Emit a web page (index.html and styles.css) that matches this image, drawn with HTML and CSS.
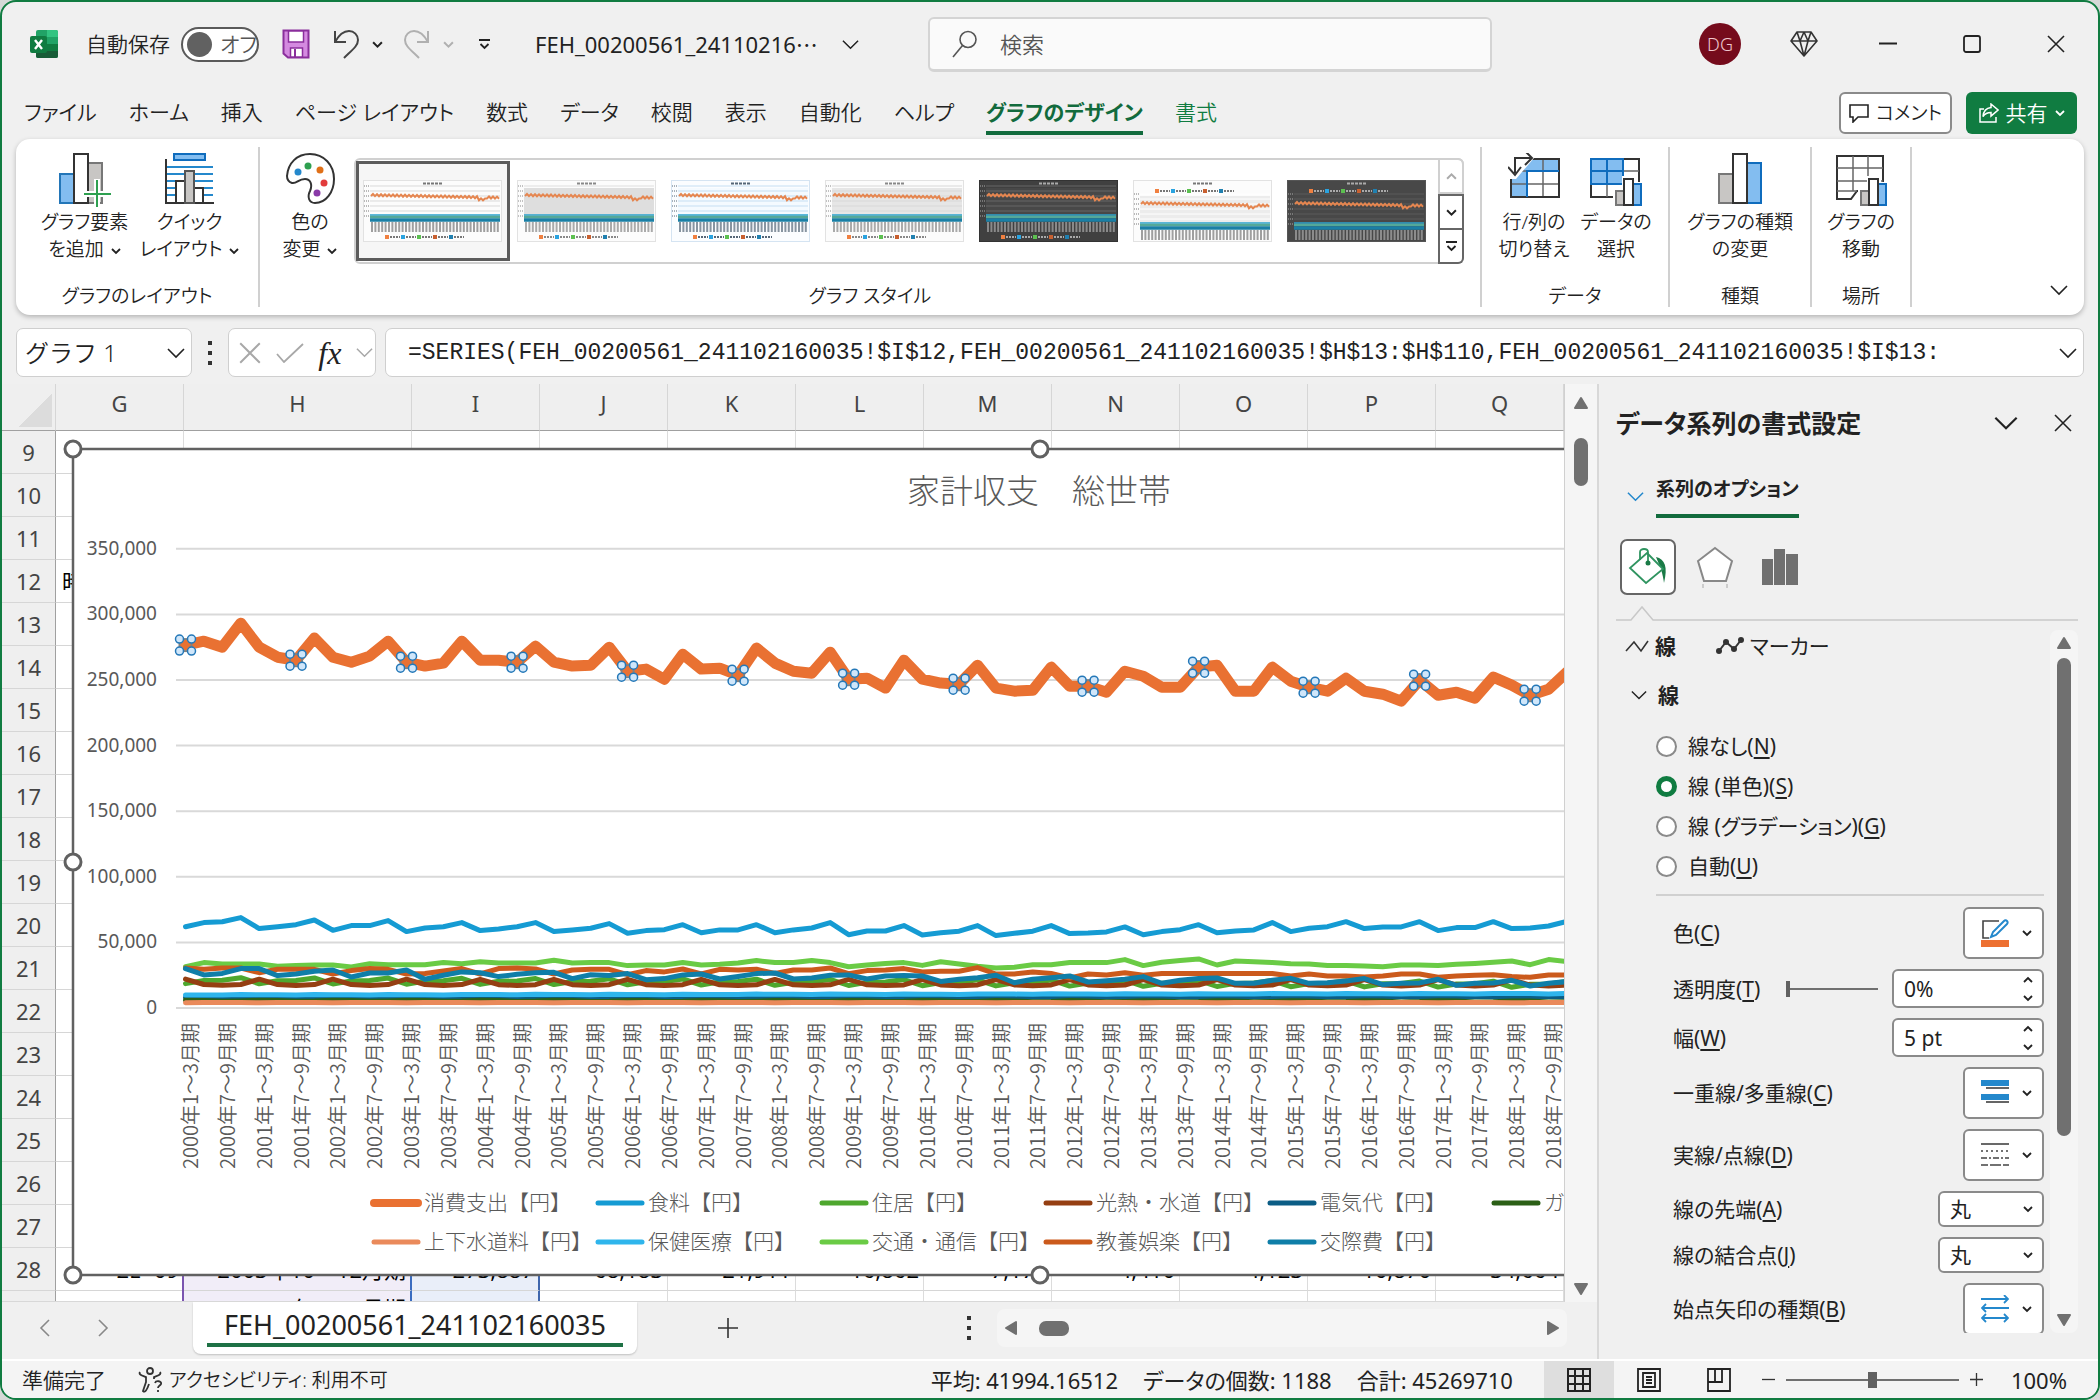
FILE: index.html
```html
<!DOCTYPE html>
<html lang="ja">
<head>
  <meta charset="UTF-8">
  <meta name="viewport" content="width=device-width, initial-scale=1.0">
  <title>FEH_00200561_241102160035 - Excel</title>
  <link rel="stylesheet" href="styles.css">
</head>
<body>
  <svg class="defs" aria-hidden="true">
    <symbol id="chev" viewBox="0 0 10 10"><path d="M1 3l4 4 4-4" fill="none" stroke="currentColor" stroke-width="1.8"/></symbol>
    <symbol id="chev-thin" viewBox="0 0 18 18"><path d="M1 5l8 8 8-8" fill="none" stroke="currentColor" stroke-width="1.6"/></symbol>
    <symbol id="cross" viewBox="0 0 18 18"><path d="M1 1l16 16M17 1L1 17" fill="none" stroke="currentColor" stroke-width="1.6"/></symbol>
    <symbol id="tri" viewBox="0 0 16 14"><path d="M8 2l6 10H2z" fill="#707070" stroke="#707070" stroke-width="2" stroke-linejoin="round"/></symbol>
  </svg>

  <div class="window">
    <header class="titlebar">
      <div class="quick">
        <svg class="logo" viewBox="0 0 28 28">
          <rect x="6" y="0" width="22" height="28" rx="2" fill="#21a366"/>
          <path d="M17 0h9a2 2 0 0 1 2 2v5H17z" fill="#33c481"/>
          <path d="M6 14h11v7H6z" fill="#107c41"/><path d="M17 14h11v7H17z" fill="#107c41"/>
          <path d="M6 21h22v5a2 2 0 0 1-2 2H8a2 2 0 0 1-2-2z" fill="#185c37"/>
          <rect x="0" y="6" width="17" height="17" rx="2" fill="#107c41"/>
          <path d="M5 10l7 9M12 10l-7 9" stroke="#fff" stroke-width="2.4"/>
        </svg>
        <span class="autosave">自動保存</span>
        <button class="toggle" aria-label="自動保存"><span class="knob"></span>オフ</button>
        <button class="tool save" aria-label="上書き保存">
          <svg width="28" height="30" viewBox="0 0 28 30"><path d="M1.5 1.500h25v27H6l-4.500-4z" fill="#d48ae0" stroke="#8a2f9c" stroke-width="2"/><rect x="6.500" y="2" width="15" height="11" fill="#fff" stroke="#8a2f9c" stroke-width="1.500"/><rect x="8.500" y="19" width="12" height="9" fill="#fff" stroke="#8a2f9c" stroke-width="1.500"/><path d="M13 20v8" stroke="#8a2f9c" stroke-width="2"/></svg>
        </button>
        <button class="tool undo" aria-label="元に戻す">
          <svg width="26" height="30" viewBox="0 0 26 30" fill="none" stroke="#444" stroke-width="2"><path d="M2 2v11h11M2 13C7 4 12 2 16 2c5 0 9 4 9 9 0 6-6 10-14 18"/></svg>
          <svg width="11" height="11"><use href="#chev"/></svg>
        </button>
        <button class="tool redo" aria-label="やり直し">
          <svg width="26" height="30" viewBox="0 0 26 30" fill="none" stroke="#b0b0b0" stroke-width="2"><path d="M24 2v11H13M24 13C19 4 14 2 10 2 5 2 1 6 1 11c0 6 6 10 14 18"/></svg>
          <svg width="11" height="11"><use href="#chev"/></svg>
        </button>
        <button class="tool customize" aria-label="カスタマイズ">
          <svg width="13" height="13" viewBox="0 0 13 13" fill="none" stroke="#222" stroke-width="1.800"><path d="M1 2h11M2.500 6l4 4 4-4"/></svg>
        </button>
        <button class="filename">FEH_00200561_24110216⋯<svg width="17" height="17"><use href="#chev-thin"/></svg></button>
      </div>
      <label class="search">
        <svg width="26" height="28" viewBox="0 0 26 28" fill="none" stroke="#555" stroke-width="1.600"><circle cx="16" cy="9.500" r="8"/><path d="M10.500 15.500L1 27"/></svg>
        <input type="text" placeholder="検索">
      </label>
      <div class="wincontrols">
        <span class="avatar">DG</span>
        <svg width="28" height="28" viewBox="0 0 28 28" fill="none" stroke="#333" stroke-width="1.600" stroke-linejoin="round"><path d="M7 2h14l6 9-13 15L1 11zM1 11h26M10 11l4 15 4-15M7 2l3 9 4-9 4 9 3-9"/></svg>
        <svg width="18" height="18" viewBox="0 0 18 18"><path d="M0 8.500h18" stroke="#222" stroke-width="1.800"/></svg>
        <svg width="18" height="18" viewBox="0 0 18 18"><rect x="1" y="1" width="16" height="16" rx="2" fill="none" stroke="#222" stroke-width="1.800"/></svg>
        <svg width="18" height="18"><use href="#cross"/></svg>
      </div>
    </header>

    <nav class="tabs">
      <a href="#">ファイル</a>
      <a href="#">ホーム</a>
      <a href="#">挿入</a>
      <a href="#">ページ レイアウト</a>
      <a href="#">数式</a>
      <a href="#">データ</a>
      <a href="#">校閲</a>
      <a href="#">表示</a>
      <a href="#">自動化</a>
      <a href="#">ヘルプ</a>
      <a href="#" class="active">グラフのデザイン</a>
      <a href="#" class="context">書式</a>
      <button class="comment"><svg width="20" height="20" viewBox="0 0 20 20"><path d="M1 2h18v12H9l-5 5v-5H1z" fill="none" stroke="#222" stroke-width="1.600"/></svg>コメント</button>
      <button class="share"><svg width="20" height="20" viewBox="0 0 20 20" fill="none" stroke="#fff" stroke-width="1.500"><path d="M5 6H1v13h16v-5M12 1l7 6-7 6V9.500c-4 0-6 1-8 4C4.500 8 7.500 5 12 4.500z"/></svg>共有<svg width="10" height="10"><use href="#chev"/></svg></button>
    </nav>

    <section class="ribbon">
      <div class="group layout-group">
        <div class="group-body">
          <button class="big">
            <svg width="52" height="54" viewBox="0 0 52 54"><rect x="1" y="21" width="14" height="29" fill="#83bdf0" stroke="#2376b8" stroke-width="2"/><rect x="29" y="10" width="14" height="40" fill="#c8c6c4" stroke="#777" stroke-width="2"/><rect x="15" y="1" width="14" height="49" fill="#fff" stroke="#333" stroke-width="2"/><path d="M38 26v28M24 41h28" stroke="#fff" stroke-width="6"/><path d="M38 27v27M25 41h27" stroke="#2ea050" stroke-width="2"/></svg>
            <span>グラフ要素</span><span>を追加 <svg width="10" height="10"><use href="#chev"/></svg></span>
          </button>
          <button class="big">
            <svg width="52" height="54" viewBox="0 0 52 54"><path d="M3 14h46M3 21h46M3 28h46M3 35h46M3 42h46" stroke="#2488cc" stroke-width="2"/><rect x="10" y="1" width="31" height="6" fill="#83bdf0" stroke="#0f6cbd" stroke-width="2"/><path d="M2 6v44h48" fill="none" stroke="#333" stroke-width="2"/><rect x="12" y="28" width="9" height="22" fill="#fff" stroke="#333" stroke-width="2"/><rect x="30" y="35" width="9" height="15" fill="#fff" stroke="#333" stroke-width="2"/><rect x="21" y="18" width="9" height="32" fill="#c8c6c4" stroke="#555" stroke-width="2"/></svg>
            <span>クイック</span><span>レイアウト <svg width="10" height="10"><use href="#chev"/></svg></span>
          </button>
        </div>
        <h2>グラフのレイアウト</h2>
      </div>
      <div class="group style-group">
        <div class="group-body">
          <button class="big">
            <svg width="52" height="54" viewBox="0 0 52 54"><path d="M26 1c14 0 24 11 24 25 0 13-8 24-19 24-6 0-8-6-5-12 3-7 0-12-5-12-7 0-8 5-13 4-3-1-5-3-5-7C4 10 13 1 26 1z" fill="#fff" stroke="#333" stroke-width="2"/><circle cx="14" cy="19" r="3.500" fill="#2488cc"/><circle cx="24" cy="13" r="3.500" fill="#2ea050"/><circle cx="36" cy="17" r="3.500" fill="#e07018"/><circle cx="40" cy="30" r="3.500" fill="#e23c3c"/><circle cx="33" cy="40" r="3.500" fill="#8a3aa8"/></svg>
            <span>色の</span><span>変更 <svg width="10" height="10"><use href="#chev"/></svg></span>
          </button>
          <div class="gallery">
            <div class="gallery-items" id="gallery"></div>
            <div class="gallery-nav">
              <button class="off" aria-label="上へ"><svg class="flip" width="11" height="11"><use href="#chev"/></svg></button>
              <button aria-label="下へ"><svg width="11" height="11"><use href="#chev"/></svg></button>
              <button aria-label="その他"><svg width="13" height="13" viewBox="0 0 13 13" fill="none" stroke="#222" stroke-width="1.800"><path d="M1 2h11M2.500 6l4 4 4-4"/></svg></button>
            </div>
          </div>
        </div>
        <h2>グラフ スタイル</h2>
      </div>
      <div class="group data-group">
        <div class="group-body">
          <button class="big">
            <svg width="52" height="54" viewBox="0 0 52 54"><rect x="3" y="6" width="48" height="38" fill="#fff"/><path d="M3 6h48v12H19v26H3z" fill="#83bdf0"/><path d="M3 31h48M19 18v26M35 6v38M3 18h48" stroke="#666" stroke-width="1.500"/><path d="M3 44V6h48v38z" fill="none" stroke="#333" stroke-width="2"/><path d="M51 18H19v26" fill="none" stroke="#0f6cbd" stroke-width="2"/><path d="M0 0h26v5L8 26H0z" fill="#fff"/><path d="M7 20V5h16M0 14l7 8 6-8M17-2l7 7-7 7" fill="none" stroke="#333" stroke-width="2"/></svg>
            <span>行/列の</span><span>切り替え</span>
          </button>
          <button class="big">
            <svg width="52" height="54" viewBox="0 0 52 54"><rect x="1" y="6" width="48" height="38" fill="#fff" stroke="#333" stroke-width="2"/><path d="M1 31h48M17 6v38M33 6v38M1 18h48" stroke="#666" stroke-width="1.500"/><path d="M1 6h32v25H1zM17 6v25M1 18h32" fill="#83bdf0" stroke="#0f6cbd" stroke-width="2"/><path d="M23 54V34h9V23h14v6h7v25z" fill="#fff"/><rect x="26" y="38" width="9" height="14" fill="#c8c6c4" stroke="#777" stroke-width="2"/><rect x="43" y="31" width="8" height="21" fill="#83bdf0" stroke="#0f6cbd" stroke-width="2"/><rect x="34" y="26" width="9" height="26" fill="#fff" stroke="#333" stroke-width="2"/></svg>
            <span>データの</span><span>選択</span>
          </button>
        </div>
        <h2>データ</h2>
      </div>
      <div class="group type-group">
        <div class="group-body">
          <button class="big">
            <svg width="52" height="54" viewBox="0 0 52 54"><rect x="5" y="21" width="14" height="29" fill="#c8c6c4" stroke="#777" stroke-width="2"/><rect x="33" y="10" width="14" height="40" fill="#83bdf0" stroke="#0f6cbd" stroke-width="2"/><rect x="19" y="1" width="14" height="49" fill="#fff" stroke="#333" stroke-width="2"/></svg>
            <span>グラフの種類</span><span>の変更</span>
          </button>
        </div>
        <h2>種類</h2>
      </div>
      <div class="group place-group">
        <div class="group-body">
          <button class="big">
            <svg width="52" height="54" viewBox="0 0 52 54"><path d="M2 3h46v35H22l-6 8H2z" fill="#fff" stroke="#333" stroke-width="2"/><path d="M2 15h46M2 28h46M2 38h20M18 3v35M33 3v35" stroke="#666" stroke-width="1.500"/><path d="M23 54V34h9V23h14v6h7v25z" fill="#fff"/><rect x="26" y="38" width="9" height="14" fill="#c8c6c4" stroke="#777" stroke-width="2"/><rect x="43" y="31" width="8" height="21" fill="#83bdf0" stroke="#0f6cbd" stroke-width="2"/><rect x="34" y="26" width="9" height="26" fill="#fff" stroke="#333" stroke-width="2"/></svg>
            <span>グラフの</span><span>移動</span>
          </button>
        </div>
        <h2>場所</h2>
      </div>
      <button class="collapse" aria-label="リボンを折りたたむ"><svg width="18" height="18"><use href="#chev-thin"/></svg></button>
    </section>

    <div class="formulabar">
      <label class="namebox"><input type="text" value="グラフ 1" aria-label="名前ボックス"><svg width="18" height="18"><use href="#chev-thin"/></svg></label>
      <span class="dots"></span>
      <div class="fxbox">
        <svg width="22" height="22"><use href="#cross"/></svg>
        <svg width="28" height="20" viewBox="0 0 28 20"><path d="M1 11l7 8L27 1" fill="none" stroke="currentColor" stroke-width="1.800"/></svg>
        <i>fx</i>
        <svg width="17" height="17"><use href="#chev-thin"/></svg>
      </div>
      <label class="formula"><input type="text" aria-label="数式" value="=SERIES(FEH_00200561_241102160035!$I$12,FEH_00200561_241102160035!$H$13:$H$110,FEH_00200561_241102160035!$I$13:"><svg width="18" height="18"><use href="#chev-thin"/></svg></label>
    </div>

    <main class="workspace">
      <div class="book">
        <div class="sheet-row">
          <div class="sheet">
            <table class="cells">
              <colgroup><col class="c-num"><col class="c-std"><col class="c-wide"><col class="c-std" span="9"></colgroup>
              <thead>
                <tr><th class="corner"></th><th>G</th><th>H</th><th>I</th><th>J</th><th>K</th><th>L</th><th>M</th><th>N</th><th>O</th><th>P</th><th>Q</th></tr>
              </thead>
              <tbody id="rows"></tbody>
            </table>
            <svg class="chart" id="chart" width="1960" height="848" viewBox="62 438 1960 848"></svg>
          </div>
          <div class="vscroll">
            <svg width="16" height="14"><use href="#tri"/></svg>
            <span class="thumb"></span>
            <svg class="flip down" width="16" height="14"><use href="#tri"/></svg>
          </div>
        </div>
        <div class="sheetbar">
          <button class="nav" aria-label="前"><svg class="right" width="18" height="18"><use href="#chev-thin"/></svg></button>
          <button class="nav" aria-label="次"><svg class="left" width="18" height="18"><use href="#chev-thin"/></svg></button>
          <button class="sheet-tab"><span>FEH_00200561_241102160035</span></button>
          <button class="add" aria-label="新しいシート"><svg width="20" height="20" viewBox="0 0 20 20"><path d="M10 0v20M0 10h20" stroke="#333" stroke-width="1.600"/></svg></button>
          <span class="dots"></span>
          <div class="hscroll">
            <svg class="left" width="16" height="14"><use href="#tri"/></svg>
            <span class="thumb"></span>
            <svg class="right" width="16" height="14"><use href="#tri"/></svg>
          </div>
        </div>
      </div>

      <aside class="panel">
        <div class="panel-head">
          <h1>データ系列の書式設定</h1>
          <button aria-label="オプション"><svg width="24" height="24"><use href="#chev-thin"/></svg></button>
          <button aria-label="閉じる"><svg width="18" height="18"><use href="#cross"/></svg></button>
        </div>
        <div class="option-head">
          <svg width="17" height="17"><use href="#chev-thin"/></svg>
          <a href="#">系列のオプション</a>
        </div>
        <div class="icons">
          <button class="on" aria-label="塗りつぶしと線">
            <svg width="40" height="40" viewBox="0 0 40 40"><path d="M28 10c9 2 12 10 8 26-1-7-2-10-3-14z" fill="#1a7a46"/><path d="M19 6L35 22 18 36 2 21z" fill="#fff" stroke="#2f9460" stroke-width="1.800"/><path d="M12 13V5c0-4 8-4 8 0v10" fill="none" stroke="#2f9460" stroke-width="1.800"/><circle cx="20" cy="16" r="2.500" fill="#1a7a46"/></svg>
          </button>
          <button aria-label="効果">
            <svg width="40" height="42" viewBox="0 0 40 42"><path d="M20 2l17 13-6 20H9L3 15z" fill="#fff" stroke="#888" stroke-width="2"/><path d="M8 38v4M32 38v4" stroke="#ccc" stroke-width="2"/></svg>
          </button>
          <button aria-label="系列のオプション">
            <svg width="36" height="38" viewBox="0 0 36 38" fill="#707070"><path d="M0 11h11v26H0zM12 1h11v36H12zM24 6h12v31H24z"/></svg>
          </button>
        </div>
        <svg class="notch" height="16" viewBox="0 0 462 16" preserveAspectRatio="xMinYMin slice"><path d="M0 15h15L26 2l11 13h425" fill="none" stroke="#c8c8c8" stroke-width="1.500"/></svg>
        <div class="panel-scroll">
          <div class="panel-body">
            <div class="modes">
              <a href="#" class="on"><svg width="24" height="14" viewBox="0 0 24 14"><path d="M1 12l8-9 7 9 7-10" fill="none" stroke="#333" stroke-width="1.600"/></svg>線</a>
              <a href="#"><svg width="28" height="18" viewBox="0 0 28 18"><path d="M3 14l7-9 8 7 7-9" fill="none" stroke="#333" stroke-width="2"/><g fill="#333"><circle cx="3" cy="14" r="3"/><circle cx="10" cy="5" r="3"/><circle cx="18" cy="12" r="3"/><circle cx="25" cy="3" r="3"/></g></svg>マーカー</a>
            </div>
            <h3><svg width="16" height="16"><use href="#chev-thin"/></svg>線</h3>
            <div class="radios">
              <label><input type="radio" name="line">線なし(<u>N</u>)</label>
              <label><input type="radio" name="line" checked>線 (単色)(<u>S</u>)</label>
              <label><input type="radio" name="line">線 (グラデーション)(<u>G</u>)</label>
              <label><input type="radio" name="line">自動(<u>U</u>)</label>
            </div>
            <div class="fields">
              <div class="field tall">
                <label for="color">色(<u>C</u>)</label>
                <button class="pick" id="color"><svg width="28" height="28" viewBox="0 0 28 28"><path d="M18 2H2v17h6" fill="none" stroke="#444" stroke-width="1.600"/><path d="M23 2c2-2 5 1 3 3L15 16l-5 2 2-5z" fill="#fff" stroke="#2488cc" stroke-width="2"/><path d="M0 21h28v7H0z" fill="#ed7031"/></svg><svg width="10" height="10"><use href="#chev"/></svg></button>
              </div>
              <div class="field">
                <label for="alpha">透明度(<u>T</u>)</label>
                <input type="range" class="slider" min="0" max="100" value="0" aria-label="透明度">
                <span class="spin"><input type="text" id="alpha" value="0%"><span class="arrows"><svg class="flip" width="10" height="10"><use href="#chev"/></svg><svg width="10" height="10"><use href="#chev"/></svg></span></span>
              </div>
              <div class="field">
                <label for="width">幅(<u>W</u>)</label>
                <span class="spin"><input type="text" id="width" value="5 pt"><span class="arrows"><svg class="flip" width="10" height="10"><use href="#chev"/></svg><svg width="10" height="10"><use href="#chev"/></svg></span></span>
              </div>
              <div class="field tall">
                <label for="compound">一重線/多重線(<u>C</u>)</label>
                <button class="pick" id="compound"><svg width="28" height="28" viewBox="0 0 28 28"><path d="M0 4h28M0 18h28" stroke="#2488cc" stroke-width="6"/><path d="M5 9h23M5 23h23" stroke="#333" stroke-width="1.600"/></svg><svg width="10" height="10"><use href="#chev"/></svg></button>
              </div>
              <div class="field tall">
                <label for="dash">実線/点線(<u>D</u>)</label>
                <button class="pick" id="dash"><svg width="28" height="28" viewBox="0 0 28 28" stroke="#444" stroke-width="1.600"><path d="M0 3h28"/><path d="M0 10h28" stroke-dasharray="2 3"/><path d="M0 17h28" stroke-dasharray="6 2 2 2"/><path d="M0 24h28" stroke-dasharray="7 2 11 2"/></svg><svg width="10" height="10"><use href="#chev"/></svg></button>
              </div>
              <div class="field short">
                <label for="cap">線の先端(<u>A</u>)</label>
                <span class="select"><select id="cap"><option>丸</option></select><svg width="10" height="10"><use href="#chev"/></svg></span>
              </div>
              <div class="field short">
                <label for="join">線の結合点(<u>J</u>)</label>
                <span class="select"><select id="join"><option>丸</option></select><svg width="10" height="10"><use href="#chev"/></svg></span>
              </div>
              <div class="field tall">
                <label for="arrow">始点矢印の種類(<u>B</u>)</label>
                <button class="pick" id="arrow"><svg width="28" height="28" viewBox="0 0 28 28" fill="none" stroke="#2488cc" stroke-width="1.800"><path d="M0 4h27M23 0l4 4-4 4M28 13H1M5 9l-4 4 4 4M1 23h26M5 19l-4 4 4 4M23 19l4 4-4 4"/></svg><svg width="10" height="10"><use href="#chev"/></svg></button>
              </div>
            </div>
          </div>
          <div class="vscroll panel-vscroll">
            <svg width="16" height="14"><use href="#tri"/></svg>
            <span class="thumb"></span>
            <svg class="flip down" width="16" height="14"><use href="#tri"/></svg>
          </div>
        </div>
      </aside>
    </main>

    <footer class="status">
      <span>準備完了</span>
      <span class="access"><svg width="26" height="26" viewBox="0 0 26 26" fill="none" stroke="#333" stroke-width="1.800"><circle cx="12" cy="4" r="3"/><path d="M2 5c-2 3 4 4 6 5v5l-3 9c2 2 4-1 6-7M22 5c2 3-4 4-6 5v2M17 16c1-3 7-2 6 1-1 2-3 2-3 4M20 23v2"/></svg>アクセシビリティ: 利用不可</span>
      <div class="stats"><span>平均: 41994.16512</span><span>データの個数: 1188</span><span>合計: 45269710</span></div>
      <button class="view on" aria-label="標準"><svg width="24" height="24" viewBox="0 0 24 24" fill="none" stroke="#222" stroke-width="2"><path d="M1 1h22v22H1zM1 8h22M1 16h22M8 1v22M16 1v22"/></svg></button>
      <button class="view" aria-label="ページ レイアウト"><svg width="24" height="24" viewBox="0 0 24 24" fill="none" stroke="#222" stroke-width="1.800"><path d="M1 1h22v22H1zM6 5h12v14H6zM9 9h6M9 12h6M9 15h6"/></svg></button>
      <button class="view" aria-label="改ページ プレビュー"><svg width="24" height="24" viewBox="0 0 24 24" fill="none" stroke="#222" stroke-width="1.800"><path d="M1 1h22v22H1zM1 14h14V1M8 1v13"/></svg></button>
      <div class="zoom">
        <svg width="13" height="13" viewBox="0 0 13 13"><path d="M0 6.500h13" stroke="#333" stroke-width="1.300"/></svg>
        <input type="range" min="0" max="200" value="100" aria-label="ズーム">
        <svg width="13" height="13" viewBox="0 0 13 13"><path d="M0 6.500h13M6.500 0v13" stroke="#333" stroke-width="1.300"/></svg>
        <span>100%</span>
      </div>
    </footer>
  </div>
  <script src="chart.js"></script>
</body>
</html>
```
FILE: styles.css
```css
* {
  box-sizing: border-box;
}
body {
  margin: 0;
  background: #d5d9d7;
  color: #222;
  font-family: "Noto Sans", "Noto Sans CJK JP", sans-serif;
  font-feature-settings: "palt";
  font-size: 21px;
  font-weight: 350;
  line-height: 26px;
}
button, input, select {
  font: inherit;
  font-feature-settings: inherit;
  color: inherit;
}
button {
  background: none;
  border: none;
  padding: 0;
  white-space: nowrap;
}
input {
  border: none;
  background: none;
  outline: none;
  min-width: 0;
}
a {
  color: inherit;
  text-decoration: none;
}
h1, h2, h3 {
  margin: 0;
  font-weight: inherit;
}
svg {
  display: block;
  flex: none;
}
.defs {
  position: absolute;
  width: 0;
  height: 0;
}
.flip {
  transform: rotate(180deg);
}
.left {
  transform: rotate(-90deg);
}
.right {
  transform: rotate(90deg);
}
.window {
  display: flex;
  flex-direction: column;
  height: 100vh;
  border: 2px solid #107c41;
  border-radius: 16px;
  background: #f0f0f0;
  overflow: hidden;
}

/* title bar */
.titlebar {
  display: flex;
  align-items: center;
  height: 84px;
  padding-left: 28px;
}
.quick {
  display: flex;
  align-items: center;
  flex: none;
  width: 898px;
}
.logo {
  width: 28px;
  height: 28px;
}
.autosave {
  margin-left: 28px;
  width: 95px;
  white-space: nowrap;
}
.toggle {
  display: flex;
  align-items: center;
  gap: 8px;
  flex: none;
  width: 78px;
  height: 35px;
  padding: 0 4px;
  border: 2px solid #5a5a5a;
  border-radius: 18px;
  background: #fff;
  color: #555;
}
.knob {
  flex: none;
  width: 25px;
  height: 25px;
  border-radius: 50%;
  background: #616161;
}
.tool {
  display: flex;
  align-items: center;
  gap: 13px;
  margin-left: 23px;
}
.redo {
  color: #b0b0b0;
  margin-left: 21px;
}
.customize {
  margin-left: 24px;
}
.filename {
  display: flex;
  align-items: center;
  gap: 24px;
  margin-left: 44px;
  font-size: 22px;
  font-weight: 400;
}
.search {
  display: flex;
  align-items: center;
  gap: 20px;
  width: 564px;
  height: 55px;
  padding: 0 22px;
  border: 2px solid #d4d4d4;
  border-bottom-width: 3px;
  border-radius: 6px;
  background: #fafafa;
}
.search input {
  flex: 1;
  font-size: 22px;
}
.search input::placeholder {
  color: #555;
  opacity: 1;
}
.wincontrols {
  display: grid;
  grid-template-columns: repeat(5, 84px);
  align-items: center;
  justify-items: center;
  margin-left: auto;
}
.avatar {
  width: 42px;
  height: 42px;
  border-radius: 50%;
  background: #750b1c;
  color: #f0c8ce;
  font-size: 18px;
  line-height: 42px;
  text-align: center;
}

/* tabs */
.tabs {
  display: flex;
  align-items: center;
  gap: 32px;
  height: 53px;
  padding: 0 21px 0 22px;
  white-space: nowrap;
}
.tabs a {
  height: 44px;
  line-height: 42px;
}
.tabs .active {
  color: #126b3d;
  font-weight: bold;
  border-bottom: 4px solid #126b3d;
}
.tabs .context {
  color: #107c41;
}
.comment, .share {
  display: flex;
  align-items: center;
  justify-content: center;
  gap: 7px;
  height: 42px;
  border-radius: 6px;
}
.comment {
  width: 113px;
  margin-left: auto;
  border: 2px solid #8a8a8a;
  background: #fff;
  font-size: 19px;
}
.share {
  width: 111px;
  margin-left: -18px;
  background: #107c41;
  color: #fff;
}

/* ribbon */
.ribbon {
  display: flex;
  height: 176px;
  margin: 0 14px;
  padding: 8px 0;
  border-radius: 14px;
  background: #fff;
  box-shadow: 0 2px 5px rgba(0, 0, 0, 0.25);
  font-size: 19px;
}
.group {
  display: flex;
  flex-direction: column;
  justify-content: space-between;
  border-right: 2px solid #d0d0d0;
}
.group h2 {
  font-size: 19px;
  line-height: 22px;
  text-align: center;
}
.group-body {
  display: flex;
  justify-content: center;
}
.layout-group {
  width: 244px;
}
.style-group {
  flex: 1;
}
.data-group {
  width: 188px;
}
.type-group {
  width: 142px;
}
.place-group {
  width: 100px;
}
.layout-group .group-body {
  gap: 3px;
}
.layout-group .big {
  width: 102px;
}
.data-group .group-body {
  gap: 4px;
}
.data-group .big {
  width: 78px;
}
.style-group .group-body {
  justify-content: flex-start;
  gap: 10px;
  padding: 0 16px 0 16px;
}
.style-group .big {
  width: 68px;
}
.big {
  display: flex;
  flex-direction: column;
  align-items: center;
  padding-top: 6px;
}
.big > svg {
  margin-bottom: 2px;
}
.big span {
  line-height: 27px;
}
.big span svg {
  display: inline-block;
  margin-left: 2px;
}
.gallery {
  display: flex;
  flex: 1;
  min-width: 0;
  height: 106px;
  margin-top: 11px;
  border: 2px solid #d0d0d0;
  border-radius: 6px;
}
.gallery-items {
  display: flex;
  flex: 1;
  overflow: hidden;
}
.style-item {
  flex: none;
  width: 154px;
  height: 100px;
  margin-top: 1px;
  padding: 15px 4px;
  border: 3px solid transparent;
}
.style-item.on {
  border-color: #5c5c5c;
  background: #f6f6f6;
}
.gallery-nav {
  display: flex;
  flex-direction: column;
  width: 26px;
  margin: -2px -2px -2px 0;
}
.gallery-nav button {
  display: flex;
  align-items: center;
  justify-content: center;
  flex: 1;
  border: 2px solid #666;
}
.gallery-nav button + button + button {
  border-top: none;
  border-bottom-right-radius: 6px;
}
.gallery-nav .off {
  border-color: #d0d0d0;
  border-top-right-radius: 6px;
  color: #aaa;
}
.collapse {
  display: flex;
  align-items: flex-end;
  justify-content: flex-end;
  flex: none;
  width: 172px;
  padding: 0 16px 8px 0;
}

/* formula bar */
.formulabar {
  display: flex;
  margin: 13px 14px 7px;
  height: 49px;
}
.namebox, .fxbox, .formula {
  display: flex;
  align-items: center;
  border: 1px solid #cfcfcf;
  border-radius: 7px;
  background: #fff;
}
.namebox {
  width: 176px;
  padding: 0 6px;
}
.namebox input {
  flex: 1;
  font-size: 24px;
  font-feature-settings: normal;
}
.dots {
  width: 4px;
  height: 24px;
  margin: auto 16px;
  background: repeating-linear-gradient(#333 0 4px, transparent 4px 10px);
}
.fxbox {
  justify-content: space-between;
  width: 148px;
  padding: 0 2px 0 10px;
  color: #a8a8a8;
}
.fxbox i {
  color: #222;
  font-family: "Liberation Serif", serif;
  font-size: 32px;
}
.formula {
  flex: 1;
  margin-left: 9px;
  padding: 0 6px 0 20px;
}
.formula input {
  flex: 1;
  font-family: "Liberation Mono", monospace;
  font-size: 23px;
}

/* worksheet */
.workspace {
  display: flex;
  flex: 1;
  min-height: 0;
}
.book {
  display: flex;
  flex-direction: column;
  flex: 1;
  min-width: 0;
}
.sheet-row {
  display: flex;
  flex: 1;
  min-height: 0;
}
.sheet {
  position: relative;
  flex: 1;
  overflow: hidden;
  background: #fff;
  border-right: 1px solid #d0d0d0;
  border-bottom: 1px solid #d8d8d8;
}
.cells {
  table-layout: fixed;
  width: 1562px;
  border-spacing: 0;
  font-feature-settings: normal;
  font-size: 22px;
  font-weight: 400;
}
.c-num {
  width: 54px;
}
.c-std {
  width: 128px;
}
.c-wide {
  width: 228px;
}
.cells th {
  padding: 0;
  background: #efefef;
  color: #444;
  font-weight: normal;
  border-right: 1px solid #d6d6d6;
}
.cells thead th {
  height: 47px;
  padding-top: 6px;
  vertical-align: top;
  border-bottom: 1px solid #a0a0a0;
}
.cells .corner {
  background: linear-gradient(to bottom right, transparent 50%, #dcdcdc 50%) 16px 9px / 34px 34px no-repeat #efefef;
}
.cells td, .cells tbody th {
  height: 43px;
  border-bottom: 1px solid #d6d6d6;
}
.cells tbody th {
  border-right-color: #a0a0a0;
}
.cells td {
  padding: 0 4px;
  border-right: 1px solid #dcdcdc;
  color: #000;
  line-height: 30px;
  text-align: right;
  white-space: nowrap;
}
.cells tr:last-child td {
  line-height: 34px;
  vertical-align: top;
}
.cells td.head {
  text-align: left;
  padding-left: 6px;
}
.cells td.sel-cat {
  background: #f1edf8;
  border-right: 2px solid #3a6cc0;
  box-shadow: -2px 0 #7b55b0;
}
.cells td.sel-val {
  background: #e9eef9;
  border-right: 2px solid #3f66ad;
}
.chart {
  position: absolute;
  left: 60px;
  top: 54px;
}
.chart text {
  fill: #595959;
  font-family: "Noto Sans", "Noto Sans CJK JP", sans-serif;
}
.chart .title {
  font-size: 33px;
  font-weight: 300;
}
.chart .axis {
  font-size: 19px;
  font-weight: 400;
}
.chart .cat, .chart .legend {
  font-family: "Noto Sans CJK JP", sans-serif;
  font-feature-settings: normal;
  font-size: 20px;
  font-weight: 350;
}
.chart .legend {
  font-size: 21px;
  font-weight: 300;
}
.vscroll {
  display: flex;
  flex-direction: column;
  align-items: center;
  width: 32px;
  padding: 12px 0 6px;
  background: #f5f5f5;
}
.vscroll .thumb {
  width: 14px;
  height: 48px;
  margin-top: 28px;
  border-radius: 7px;
  background: #707070;
}
.vscroll .down {
  margin-top: auto;
}

/* sheet tabs */
.sheetbar {
  display: flex;
  align-items: center;
  height: 57px;
  padding: 0 30px 5px 0;
}
.nav {
  width: 58px;
  padding-left: 34px;
  color: #888;
}
.sheet-tab {
  align-self: stretch;
  margin-left: 75px;
  padding: 0 14px;
  border-radius: 0 0 8px 8px;
  background: #fff;
  box-shadow: 0 1px 2px rgba(0, 0, 0, 0.2);
  font-size: 27px;
  font-weight: 400;
}
.sheet-tab span {
  display: block;
  width: 416px;
  height: 44px;
  margin-bottom: 6px;
  line-height: 44px;
  border-bottom: 4px solid #1e7145;
}
.add {
  margin-left: 81px;
}
.sheetbar .dots {
  margin: 0 26px 0 auto;
}
.hscroll {
  display: flex;
  align-items: center;
  width: 570px;
  height: 38px;
  padding: 0 6px;
  border-radius: 8px;
  background: #f5f5f5;
}
.hscroll .thumb {
  width: 30px;
  height: 15px;
  margin: 0 auto 0 20px;
  border-radius: 7px;
  background: #707070;
}

/* format panel */
.panel {
  display: flex;
  flex-direction: column;
  width: 501px;
  padding: 19px 20px 26px 17px;
  border-left: 2px solid #d8d8d8;
}
.panel-head {
  display: flex;
  align-items: center;
  height: 40px;
  padding-right: 6px;
}
.panel-head h1 {
  margin-right: auto;
  font-size: 25px;
  font-weight: bold;
}
.panel-head button + button {
  margin-left: 36px;
}
.option-head {
  display: flex;
  align-items: center;
  gap: 12px;
  height: 44px;
  margin: 31px 0 0 11px;
  color: #2488cc;
}
.option-head a {
  height: 44px;
  color: #222;
  font-size: 19px;
  font-weight: bold;
  line-height: 30px;
  border-bottom: 4px solid #126b3d;
}
.icons {
  display: flex;
  align-items: center;
  gap: 19px;
  margin: 21px 0 0 4px;
}
.icons button {
  display: flex;
  align-items: center;
  justify-content: center;
  width: 56px;
  height: 56px;
}
.icons button + button {
  width: 40px;
}
.icons button + button + button {
  margin-left: 6px;
}
.icons .on {
  border: 2px solid #666;
  border-radius: 7px;
  background: #fff;
}
.notch {
  width: 100%;
  margin-top: 10px;
}
.panel-scroll {
  display: flex;
  flex: 1;
  min-height: 0;
  margin-top: 9px;
}
.panel-body {
  flex: 1;
  overflow: hidden;
  padding: 3px 6px 0 9px;
  font-weight: 400;
}
.modes {
  display: flex;
  gap: 40px;
}
.modes a {
  display: flex;
  align-items: center;
  gap: 6px;
}
.modes .on {
  font-weight: bold;
}
.panel-body h3 {
  display: flex;
  align-items: center;
  gap: 11px;
  margin: 23px 0 18px 6px;
  font-size: 21px;
  font-weight: bold;
}
.radios {
  display: flex;
  flex-direction: column;
  margin-left: 31px;
  padding-bottom: 8px;
  border-bottom: 2px solid #d0d0d0;
}
.radios label {
  display: flex;
  align-items: center;
  height: 40px;
  white-space: pre;
}
.radios input {
  appearance: none;
  width: 21px;
  height: 21px;
  margin: 0 11px 0 0;
  border: 2px solid #8a8a8a;
  border-radius: 50%;
  background: #fff;
}
.radios input:checked {
  border: 5px solid #107c41;
}
u {
  text-underline-offset: 3px;
}
.fields {
  display: flex;
  flex-direction: column;
  gap: 10px;
  margin: 11px 0 0 48px;
}
.field {
  display: flex;
  align-items: center;
  flex: none;
  height: 39px;
}
.field.tall {
  height: 52px;
}
.field.short {
  height: 36px;
}
.field > label {
  margin-right: auto;
  white-space: nowrap;
}
.pick, .spin, .select {
  display: flex;
  align-items: center;
  border: 2px solid #8a8a8a;
  border-radius: 6px;
  background: #fff;
}
.pick {
  gap: 13px;
  width: 81px;
  height: 52px;
  padding-left: 16px;
}
.spin {
  width: 152px;
  height: 39px;
  padding: 0 9px 0 10px;
}
.spin input {
  flex: 1;
  padding: 0;
}
.arrows {
  display: flex;
  flex-direction: column;
  gap: 8px;
}
.select {
  position: relative;
  width: 106px;
  height: 36px;
}
.select select {
  appearance: none;
  width: 100%;
  height: 100%;
  padding: 0 10px;
  border: none;
  background: none;
}
.select svg {
  position: absolute;
  right: 9px;
  pointer-events: none;
}
input[type="range"] {
  appearance: none;
  height: 20px;
  margin: 0;
  background: linear-gradient(#707070, #707070) center / 100% 2px no-repeat;
}
input[type="range"]::-webkit-slider-thumb {
  appearance: none;
  width: 4px;
  height: 16px;
  background: #616161;
}
.field .slider {
  width: 92px;
  margin-right: 14px;
}
.panel-vscroll {
  width: 28px;
  padding-top: 6px;
  border-radius: 8px;
}
.panel-vscroll .thumb {
  height: 478px;
  margin-top: 8px;
}

/* status bar */
.status {
  display: flex;
  align-items: center;
  height: 39px;
  padding-left: 20px;
  border-top: 2px solid #fff;
  background: #f4f4f4;
  white-space: nowrap;
}
.access {
  display: flex;
  align-items: center;
  gap: 5px;
  margin-left: 32px;
  font-size: 19px;
}
.stats {
  display: flex;
  gap: 25px;
  margin: 0 31px 0 auto;
  font-size: 22px;
  font-weight: 400;
}
.view {
  display: flex;
  align-items: center;
  justify-content: center;
  width: 70px;
  height: 37px;
}
.view.on {
  background: #dedede;
}
.zoom {
  display: flex;
  align-items: center;
  gap: 11px;
  margin-left: 8px;
  padding-right: 31px;
  font-size: 22px;
  font-weight: 400;
}
.zoom input {
  width: 173px;
}
.zoom input::-webkit-slider-thumb {
  width: 9px;
}
.zoom span {
  margin-left: 17px;
}
```
FILE: chart.js
```javascript
const POINTS = 76;
const X0 = 185.5;
const STEP = 18.42;
const ZERO_Y = 1008;
const PX_PER_K = 1.312;

// repeat a yearly pattern over the whole range, sliding by `drift` in total
function cycle(pattern, drift) {
  const out = [];
  for (let i = 0; i < POINTS; i++) {
    out.push(pattern[i % pattern.length] + drift * i / POINTS);
  }
  return out;
}

// values in thousands of yen, one per quarter
const total = [276.6,279.6,275,293.3,275,267.4,265.1,281.9,267.4,263.6,268.2,279.6,263.6,260.6,262.9,279.6,265.1,265.1,263.6,275.8,263.6,260.6,261.3,275,256.7,258.3,250.6,269.7,258.3,259,253.7,274.3,262.9,256.7,255.2,271.2,250.6,251.4,243.8,265.1,250.6,247.6,246.8,261.3,243.8,241.5,242.2,259.8,245.3,245.3,240.7,256.7,252.9,244.5,244.5,259.8,261.3,241.5,241.5,259.8,249.1,244.5,241.5,251.4,241.5,239.2,233.9,249.9,238.4,240.7,236.1,252.2,246.1,238.4,243,256];
const food = [62,65.1,65.8,68.9,60.5,62,63.5,67.1,59.2,62.8,62.8,66.6,58.2,61,62,65.1,59,60.2,62,65.1,58.2,59.5,60.8,64.3,56.9,59,59.7,63.5,57.4,59.5,59.5,63.5,57.4,59.5,61,65.1,55.9,58.7,58.7,62.8,55.7,57.4,58.5,62.8,55.2,56.9,58.5,62.8,56.7,57.2,58,61.8,55.9,58.2,59.7,63.5,57.4,58.7,59.5,65.1,58.2,60.8,62,65.8,60.5,61.8,61.8,65.8,59,61.3,61.3,65.8,60.5,61,62.5,66.1];
const transport = [31.5,34.6,33.6,33.6,33.6,31.8,32.3,32.8,32.8,31.3,33.8,33,33,33,34.6,33.8,35.3,34.3,34.3,34.3,36.4,34.3,34.6,34.6,32.3,32.8,32.8,34.6,32.8,33.3,34.3,36.1,34.6,34.6,36.1,34.6,31.5,32.8,34,34.6,32.5,35.3,33.6,31.8,30.5,31,33,33,34.6,34.6,34.6,36.9,32.3,34.8,36.1,37.4,32.8,35.8,35.3,34.6,33.8,33.6,32.3,32.5,32,31.5,32.8,32.8,32.5,33.3,34,34.8,35.8,33,36.9,35.3];
const leisure = [30.5,29.5,30.5,30.5,26.9,29.5,29.5,29.5,25.9,28.5,30,29.5,25.9,26.4,28.2,30,25.9,30,30.5,29.7,25.9,29,29.5,29.5,25.4,28.5,27.5,29.7,25.9,29.5,29,29.5,26.4,29,29,30.5,26.2,28.5,29,30,27.5,28,28,30.8,25.9,25.9,27.5,26.4,22.9,25.9,25.2,26.9,24.9,26.2,26.2,26.2,26.2,26.2,26.2,26.2,24.4,25.9,24.4,24.4,23.6,24.4,25.9,25.9,23.4,24.4,24.9,25.4,23.9,23.4,25.2,25.2];
const social = [30,25.2,26.4,30,30,24.7,25.9,28,29,23.6,26.7,26.7,29,21.9,24.9,27.5,26.9,23.9,25.7,26.9,27.2,22.4,25.4,24.7,26.2,21.6,22.4,25.2,25.9,22.1,24.1,26.2,26.7,22.1,22.9,24.9,25.2,22.1,24.4,24.7,24.4,20.3,21.9,23.1,24.9,19.3,21.9,23.1,24.4,19.8,20.8,21.9,23.9,18.8,21.1,22.4,22.9,18.8,18.8,21.1,22.6,18.8,19.3,20.6,22.4,17.8,18.8,19.1,21.9,17.3,18.8,19.1,21.1,16.8,18.8,20.1];

// drawn in this order, later series on top; row/col place the legend entry
const series = [
  { name: '消費支出【円】', color: '#e97132', width: 11, row: 0, col: 0, data: total },
  { name: '食料【円】', color: '#159bd3', width: 5, row: 0, col: 1, data: food },
  { name: '住居【円】', color: '#4ea72e', width: 5, row: 0, col: 2, data: cycle([18.6, 21, 21.3, 23.2], -3) },
  { name: '光熱・水道【円】', color: '#953f12', width: 5, row: 0, col: 3, data: cycle([22, 17.9, 17.3, 17.9], -0.5) },
  { name: '電気代【円】', color: '#0b5d85', width: 5, row: 0, col: 4, data: cycle([8, 7.7, 7.8, 7.7], 1) },
  { name: 'ガス代【円】', color: '#2b5f16', width: 5, row: 0, col: 5, data: cycle([6, 5.8, 5.2, 5.4], -0.6) },
  { name: '上下水道料【円】', color: '#ea8a5b', width: 5, row: 1, col: 0, data: cycle([4, 4.1, 4.1, 4.2], 0) },
  { name: '保健医療【円】', color: '#2fb5ec', width: 5, row: 1, col: 1, data: cycle([10, 10, 9.8, 10.2], 1) },
  { name: '交通・通信【円】', color: '#6acb45', width: 5, row: 1, col: 2, data: transport },
  { name: '教養娯楽【円】', color: '#cb5a1c', width: 5, row: 1, col: 3, data: leisure },
  { name: '交際費【円】', color: '#0f7ea8', width: 5, row: 1, col: 4, data: social }
];

function px(i) { return X0 + STEP * i; }
function py(v) { return ZERO_Y - v * PX_PER_K; }

function points(data) {
  return data.map((v, i) => `${px(i).toFixed(1)},${py(v).toFixed(1)}`).join(' ');
}

function drawChart() {
  let s = '<rect x="73" y="449" width="1934" height="826" fill="#fff" stroke="#616161" stroke-width="2.500"/>';
  s += '<text class="title" x="1039" y="503" text-anchor="middle">家計収支　総世帯</text>';
  for (let k = 0; k <= 350; k += 50) {
    const y = py(k);
    s += `<path d="M176 ${y}H1980" stroke="#d9d9d9" stroke-width="2"/>`;
    s += `<text class="axis" x="157" y="${y + 6}" text-anchor="end">${(k * 1000).toLocaleString('en-US')}</text>`;
  }
  for (const line of series) {
    s += `<polyline points="${points(line.data)}" fill="none" stroke="${line.color}" stroke-width="${line.width}" stroke-linejoin="round" stroke-linecap="round"/>`;
    const lx = 374 + line.col * 224;
    const ly = 1203 + line.row * 39;
    s += `<path d="M${lx} ${ly}h44" stroke="${line.color}" stroke-width="${line.width > 5 ? 8 : 5}" stroke-linecap="round"/>`;
    s += `<text class="legend" x="${lx + 50}" y="${ly + 7}">${line.name}</text>`;
  }
  // selection dots on the highlighted series
  for (const i of [0, 6, 12, 18, 24, 30, 36, 42, 49, 55, 61, 67, 73]) {
    s += `<rect x="${px(i) - 6}" y="${py(total[i]) - 6}" width="12" height="12" fill="none" stroke="#808080" stroke-width="2"/>`;
    for (const [dx, dy] of [[-6, -6], [6, -6], [-6, 6], [6, 6]]) {
      s += `<circle cx="${px(i) + dx}" cy="${py(total[i]) + dy}" r="4" fill="#cfe6fa" stroke="#2478b8" stroke-width="1.500"/>`;
    }
  }
  for (let n = 0; n < 38; n++) {
    const label = `${2000 + Math.floor(n / 2)}年${n % 2 ? '7～9' : '1～3'}月期`;
    s += `<text class="cat" transform="translate(${(198 + n * STEP * 2).toFixed(1)} 1169) rotate(-90)">${label}</text>`;
  }
  for (const [x, y] of [[73, 449], [1040, 449], [73, 862], [73, 1275], [1040, 1275]]) {
    s += `<circle cx="${x}" cy="${y}" r="8" fill="#fff" stroke="#616161" stroke-width="3"/>`;
  }
  document.getElementById('chart').innerHTML = s;
}

function drawRows() {
  const cells = {
    12: ['時間軸'],
    28: ['2E+09', '2003年10～12月期', '273,887', '68,183', '21,911', '16,862', '7,175', '4,410', '4,123', '10,870', '34,664'],
    29: ['2E+09', '2004年1～3月期']
  };
  let html = '';
  for (let r = 9; r <= 29; r++) {
    html += `<tr><th>${r > 28 ? '' : r}</th>`;
    for (let c = 0; c < 11; c++) {
      const text = (cells[r] && cells[r][c]) || '';
      let cls = '';
      if (r === 12) cls = 'head';
      if (r > 12 && c === 1) cls = 'sel-cat';
      if (r > 12 && c === 2) cls = 'sel-val';
      html += `<td class="${cls}">${text}</td>`;
    }
    html += '</tr>';
  }
  document.getElementById('rows').innerHTML = html;
}

// small previews of the chart styles
const themes = [
  { bg: '#fcfcfc', plot: '#fcfcfc', grid: '#d9d9d9', ink: '#777', edge: '#e2e2e2', top: 0 },
  { bg: '#fcfcfc', plot: '#dedede', grid: '#dedede', ink: '#888', edge: '#e2e2e2', top: 0 },
  { bg: '#fbfdff', plot: '#f4faff', grid: '#c5def2', ink: '#567', edge: '#d5e4f2', top: 0 },
  { bg: '#fcfcfc', plot: '#e6e6e6', grid: '#d8d8d8', ink: '#888', edge: '#e2e2e2', top: 0 },
  { bg: '#404040', plot: '#484848', grid: '#666', ink: '#aaa', edge: '#333', top: 0 },
  { bg: '#fcfcfc', plot: '#ececec', grid: '#fff', ink: '#777', edge: '#e2e2e2', top: 8 },
  { bg: '#484848', plot: '#484848', grid: '#5a5a5a', ink: '#aaa', edge: '#555', top: 8 }
];

function thumb(t) {
  const base = 40 + t.top;
  let s = `<rect x=".5" y=".5" width="138" height="61" fill="${t.bg}" stroke="${t.edge}"/>`;
  s += `<rect x="7" y="${8 + t.top}" width="130" height="32" fill="${t.plot}"/>`;
  for (let k = 0; k < 7; k++) {
    s += `<path d="M7 ${base - 4 - k * 5}h130" stroke="${t.grid}"/><path d="M1 ${base - 4 - k * 5}h5" stroke="${t.ink}" stroke-dasharray="1 1"/>`;
  }
  let line = '';
  for (let i = 0; i <= 64; i++) {
    const dip = i > 53 && i < 58 ? 2 : 0;
    line += `${8 + i * 2},${(base - 24 + i / 24 + dip - (i % 2) * 2).toFixed(1)} `;
  }
  s += `<polyline points="${line}" fill="none" stroke="#e58650" stroke-width="2"/>`;
  s += `<path d="M7 ${base - 5}h130" stroke="#2aa3cf" stroke-width="1.500"/><path d="M7 ${base - 3}h130" stroke="#55a898" stroke-width="2.500"/><path d="M7 ${base}h130" stroke="#1a7fa5" stroke-width="3.500"/>`;
  s += `<path d="M8 ${base + 7}h129" stroke="${t.ink}" stroke-opacity=".7" stroke-width="10" stroke-dasharray="2 1.400"/>`;
  s += `<path d="M60 3.500h19" stroke="${t.ink}" stroke-width="2" stroke-dasharray="3 1"/>`;
  ['#f08040', '#2aa3e0', '#5cc050', '#c86030', '#2080b0'].forEach((c, i) => {
    const x = 22 + i * 16;
    const y = t.top ? 11 : 57;
    s += `<path d="M${x} ${y}h4" stroke="${c}" stroke-width="4"/><path d="M${x + 5} ${y}h10" stroke="${t.ink}" stroke-width="2" stroke-dasharray="2 1"/>`;
  });
  return `<svg width="139" height="62" viewBox="0 0 139 62">${s}</svg>`;
}

document.getElementById('gallery').innerHTML = themes
  .map((t, i) => `<button class="style-item${i === 0 ? ' on' : ''}" aria-label="スタイル ${i + 1}">${thumb(t)}</button>`)
  .join('');
drawRows();
drawChart();
```
